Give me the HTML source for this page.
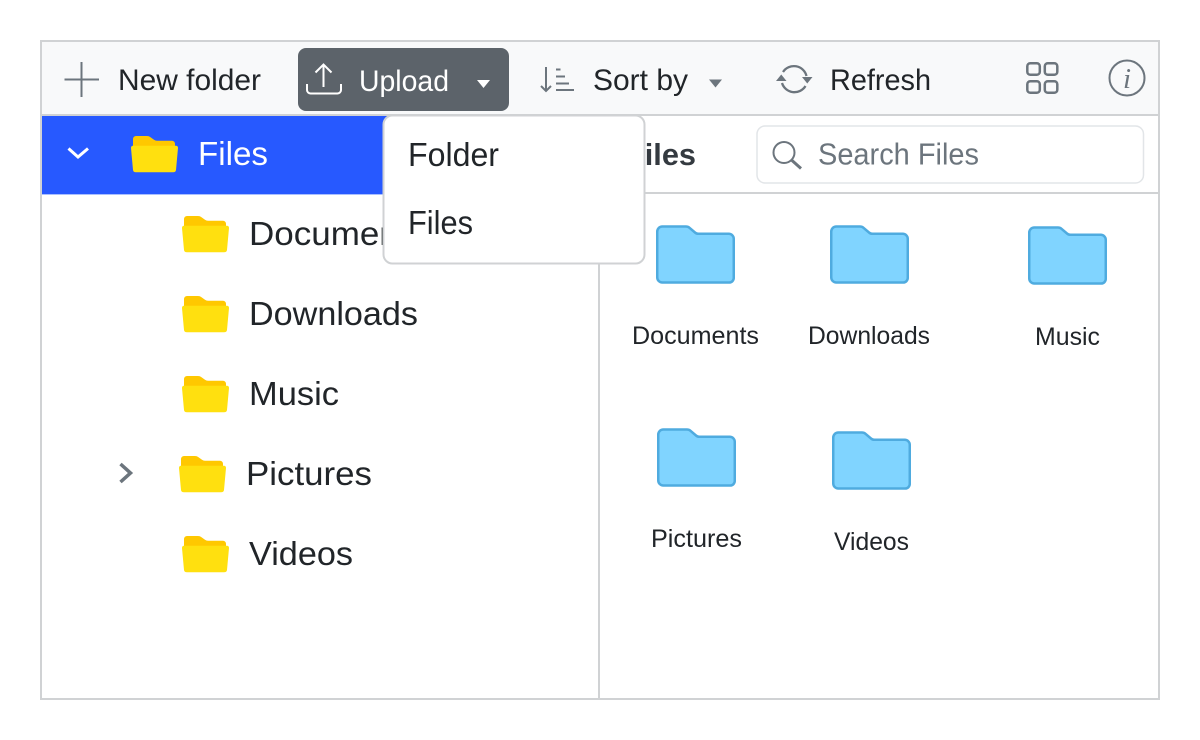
<!DOCTYPE html>
<html lang="en">
<head>
<meta charset="utf-8">
<title>File Manager</title>
<style>
html,body{margin:0;padding:0;background:#fff;width:1200px;height:740px;overflow:hidden}
svg{display:block}
text{font-family:"Liberation Sans",sans-serif;font-size:29.5px;fill:#212529}
.lb{font-size:25px}
.tr{font-size:33px}
.se{font-size:31px}
</style>
</head>
<body>
<svg xmlns="http://www.w3.org/2000/svg" width="1200" height="740" viewBox="0 0 1200 740">
<defs>
<g id="y">
<path fill="#ffc800" d="M2 3a3 3 0 0 1 3-3h11q2 0 3.500 1.200l3.500 2.600q1.300 1 3 1h15a3 3 0 0 1 3 3v8H2z"/>
<path fill="#ffe00f" d="M0 12q0-2.300 2-2.300h43q2 0 2 2.300l-2 22q-.3 2.300-3 2.300H5q-2.700 0-3-2.300z"/>
</g>
<path id="b" fill="#80d4ff" stroke="#4fabdf" stroke-width="2.500" d="M1.250 6.500a5 5 0 0 1 5-5H30q2 0 3.500 1.300L39 7.500q1.500 1.300 3.500 1.300H72.750a5 5 0 0 1 5 5V53a4.500 4.500 0 0 1-4.500 4.500H6.250a5 5 0 0 1-5-5z"/>
</defs>

<rect width="1200" height="740" fill="#fff"/>
<rect x="41" y="41" width="1118" height="74" fill="#f8f9fa"/>
<rect x="42" y="116" width="556" height="78" fill="#2759ff"/>
<rect x="42" y="194" width="556" height="1" fill="#a9bfff"/>
<rect x="41" y="41" width="1118" height="658" fill="none" stroke="#d0d2d4" stroke-width="2"/>
<rect x="42" y="114" width="1116" height="2" fill="#d0d2d4"/>
<rect x="598" y="116" width="2" height="582" fill="#d0d2d4"/>
<rect x="600" y="192" width="558" height="2" fill="#d0d2d4"/>

<!-- New folder -->
<path d="M64.500 79.500H99M81.500 62V97" stroke="#6c757d" stroke-width="2" fill="none"/>
<text x="118" y="90" textLength="143" lengthAdjust="spacingAndGlyphs">New folder</text>

<!-- Upload -->
<rect x="298" y="48" width="211" height="63" rx="8" fill="#5c636a"/>
<path d="M323.500 87V65M315.500 72.500L323.500 64.500L331.500 72.500M307 84v6a3.500 3.500 0 0 0 3.500 3.500h27a3.500 3.500 0 0 0 3.500-3.500v-6" stroke="#fff" stroke-width="2" fill="none"/>
<text x="359" y="91" textLength="90" lengthAdjust="spacingAndGlyphs" style="fill:#fff">Upload</text>
<path d="M477 80h13l-6.500 8z" fill="#fff"/>

<!-- Sort -->
<path d="M546 67V91M541 86L546 91L551 86" stroke="#6c757d" stroke-width="2" fill="none"/>
<path d="M556 69.500h4.500M556 76.500h9M556 83.500h13M556 90h18" stroke="#6c757d" stroke-width="2" fill="none"/>
<text x="593" y="90" textLength="95" lengthAdjust="spacingAndGlyphs">Sort by</text>
<path d="M709 79.500h13l-6.500 8z" fill="#6c757d"/>

<!-- Refresh -->
<path d="M783 72A13 13 0 0 1 806.500 76M805.500 86A13 13 0 0 1 782 83" stroke="#6c757d" stroke-width="2.300" fill="none"/>
<path d="M802 77h10.500l-5.250 6.500zM776 81h10.500l-5.250-6.500z" fill="#6c757d"/>
<text x="830" y="90" textLength="101" lengthAdjust="spacingAndGlyphs">Refresh</text>

<!-- Grid -->
<g fill="none" stroke="#6c757d" stroke-width="2.500">
<rect x="1027.300" y="63.300" width="12.500" height="11.500" rx="3"/>
<rect x="1044.800" y="63.300" width="12.500" height="11.500" rx="3"/>
<rect x="1027.300" y="81.300" width="12.500" height="11.500" rx="3"/>
<rect x="1044.800" y="81.300" width="12.500" height="11.500" rx="3"/>
</g>

<!-- Info -->
<circle cx="1127" cy="78" r="17.500" fill="none" stroke="#6c757d" stroke-width="2"/>
<text x="1127" y="88" text-anchor="middle" style="font-family:'Liberation Serif',serif;font-style:italic;font-size:29px;fill:#6c757d">i</text>

<!-- Tree -->
<path d="M68.500 148.500L78 157L88 148.500" stroke="#fff" stroke-width="3" fill="none"/>
<use href="#y" x="131" y="136"/>
<text class="tr" x="198" y="165" textLength="70" lengthAdjust="spacingAndGlyphs" style="fill:#fff">Files</text>

<use href="#y" x="182" y="216"/>
<text class="tr" x="249" y="245" textLength="177" lengthAdjust="spacingAndGlyphs">Documents</text>
<use href="#y" x="182" y="296"/>
<text class="tr" x="249" y="325" textLength="169" lengthAdjust="spacingAndGlyphs">Downloads</text>
<use href="#y" x="182" y="376"/>
<text class="tr" x="249" y="405" textLength="90" lengthAdjust="spacingAndGlyphs">Music</text>
<path d="M120.500 464L130.500 473L120.500 482" stroke="#6c757d" stroke-width="3.500" fill="none"/>
<use href="#y" x="179" y="456"/>
<text class="tr" x="246" y="485" textLength="126" lengthAdjust="spacingAndGlyphs">Pictures</text>
<use href="#y" x="182" y="536"/>
<text class="tr" x="249" y="565" textLength="104" lengthAdjust="spacingAndGlyphs">Videos</text>

<!-- Header -->
<text class="se" x="626" y="165" textLength="70" lengthAdjust="spacingAndGlyphs" style="font-weight:bold;fill:#343a40">Files</text>
<rect x="757" y="126" width="386.500" height="57" rx="8" fill="#fff" stroke="#e2e5e8" stroke-width="1.500"/>
<circle cx="784" cy="152.500" r="10.500" fill="none" stroke="#6c757d" stroke-width="2"/>
<path d="M791.500 160L801 168.500" stroke="#6c757d" stroke-width="3" fill="none"/>
<text class="se" x="818" y="164.500" textLength="161" lengthAdjust="spacingAndGlyphs" style="fill:#6c757d">Search Files</text>

<!-- Grid items -->
<use href="#b" x="656" y="225"/>
<text class="lb" x="632" y="344" textLength="127" lengthAdjust="spacingAndGlyphs">Documents</text>
<use href="#b" x="830" y="225"/>
<text class="lb" x="808" y="344" textLength="122" lengthAdjust="spacingAndGlyphs">Downloads</text>
<use href="#b" x="1028" y="226"/>
<text class="lb" x="1035" y="345" textLength="65" lengthAdjust="spacingAndGlyphs">Music</text>
<use href="#b" x="657" y="428"/>
<text class="lb" x="651" y="547" textLength="91" lengthAdjust="spacingAndGlyphs">Pictures</text>
<use href="#b" x="832" y="431"/>
<text class="lb" x="834" y="550" textLength="75" lengthAdjust="spacingAndGlyphs">Videos</text>

<!-- Dropdown -->
<rect x="383.500" y="115.500" width="261" height="148" rx="9" fill="#fff" stroke="#d0d2d4" stroke-width="2"/>
<text class="tr" x="408" y="166" textLength="91" lengthAdjust="spacingAndGlyphs">Folder</text>
<text class="tr" x="408" y="234" textLength="65" lengthAdjust="spacingAndGlyphs">Files</text>
</svg>
</body>
</html>
